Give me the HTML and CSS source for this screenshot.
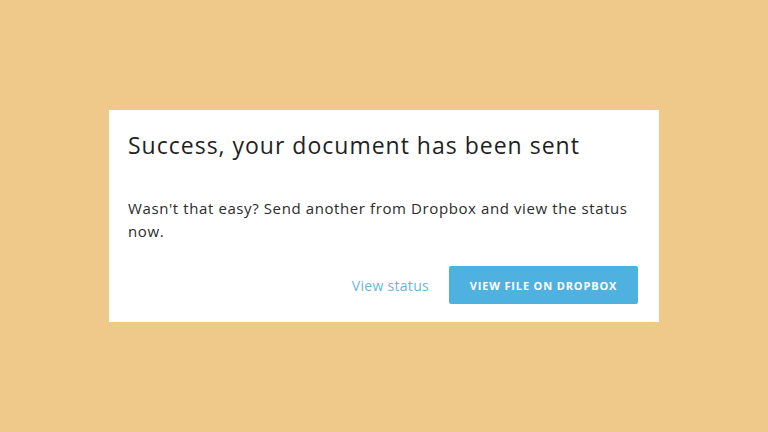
FILE: index.html
```html
<!DOCTYPE html>
<html lang="en">
<head>
    <meta charset="UTF-8">
    <meta name="viewport" content="width=device-width, initial-scale=1.0">
    <title>Document sent</title>
    <link rel="stylesheet" href="styles.css">
</head>
<body>

<div class="page">
    <div class="modal">
        <h1 class="modal-title">Success, your document has been sent</h1>
        <p class="modal-text">Wasn't that easy? Send another from Dropbox and view the status now.</p>
        <div class="modal-actions">
            <a class="link" href="#">View status</a>
            <button class="primary">VIEW FILE ON DROPBOX</button>
        </div>
    </div>
</div>

</body>
</html>
```

FILE: styles.css
```css
html, body {
    margin: 0;
    padding: 0;
}
body {
    font-family: "Open Sans", Lato, Arial, sans-serif;
    background-color: #efc98a;
    color: #222;
}
.page {
    height: 432px;
    display: flex;
    align-items: flex-start;
    justify-content: flex-start;
    padding: 110px 0 0 109px;
    box-sizing: border-box;
}
.modal {
    width: 550px;
    box-sizing: border-box;
    background-color: #fff;
    padding: 19px 21px 18px 19px;
}
.modal-title {
    margin: 0;
    font-size: 23px;
    font-weight: normal;
    letter-spacing: 1px;
    line-height: 32px;
    color: #1f1f24;
}
.modal-text {
    margin: 36px 0 0 0;
    font-size: 15px;
    line-height: 23px;
    letter-spacing: 0.6px;
    color: #2b2b2b;
}
.modal-actions {
    display: flex;
    justify-content: flex-end;
    align-items: center;
    gap: 20px;
    margin-top: 23px;
}
.link {
    color: #6bb4e0;
    text-decoration: none;
    font-size: 14px;
    letter-spacing: 0.3px;
}
.primary {
    width: 189px;
    height: 38px;
    border: none;
    border-radius: 2px;
    background-color: #4fb1e0;
    color: #fff;
    font-family: inherit;
    font-weight: bold;
    font-size: 11px;
    letter-spacing: 0.85px;
    cursor: pointer;
}
```
